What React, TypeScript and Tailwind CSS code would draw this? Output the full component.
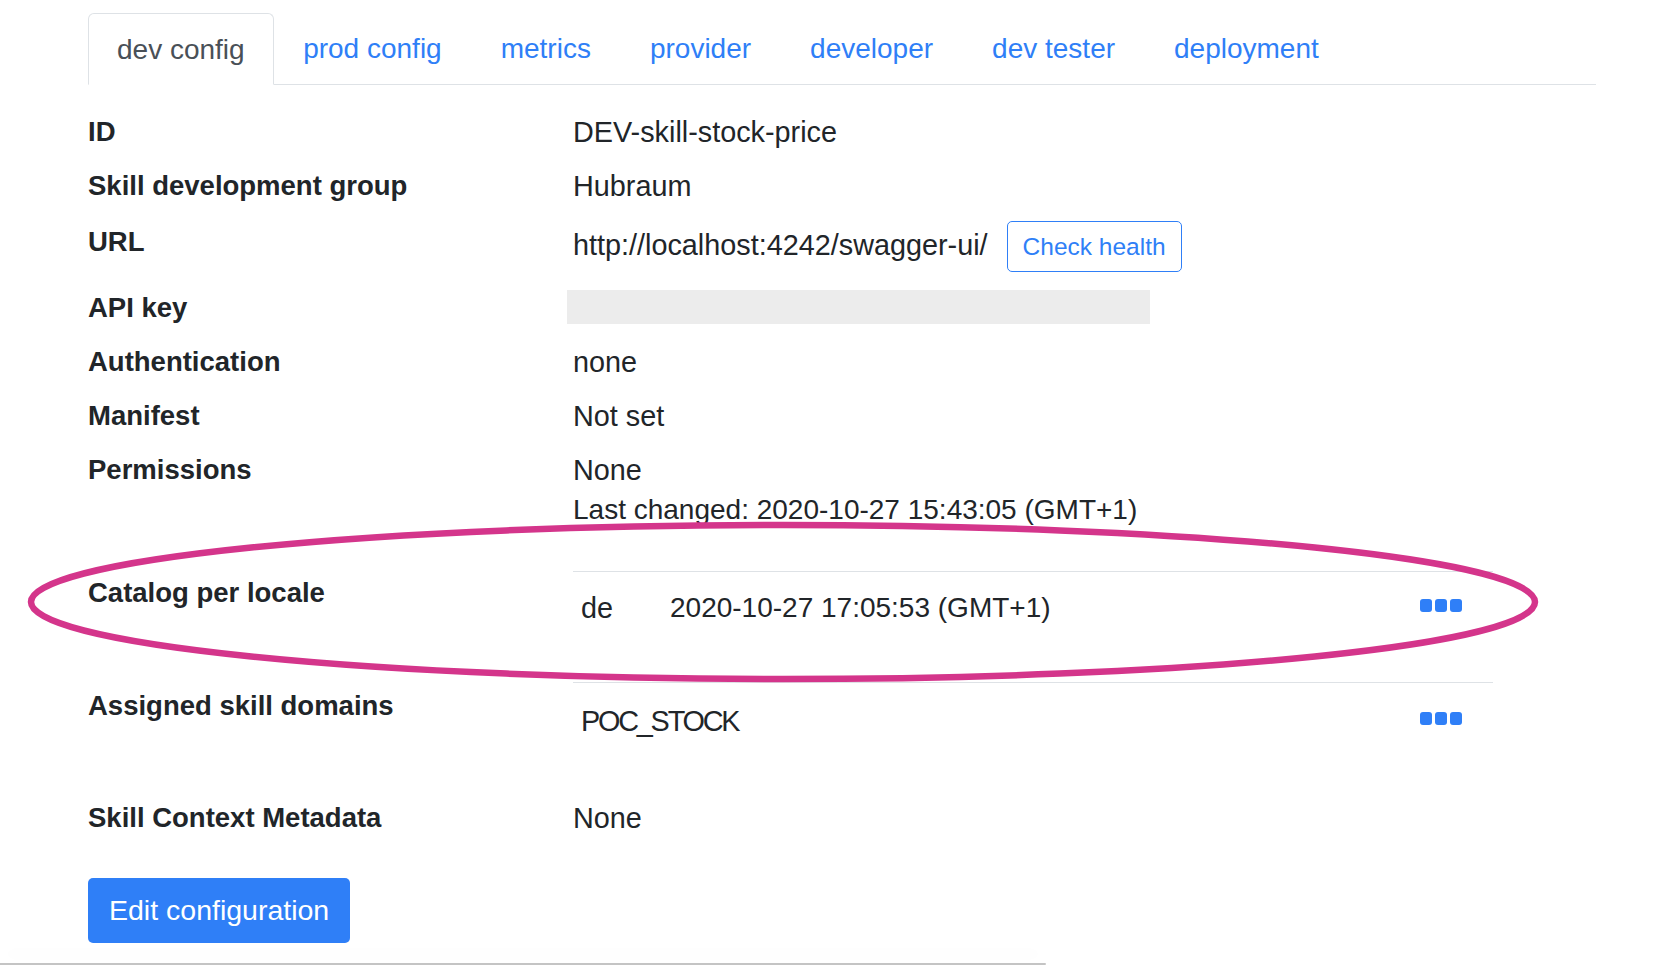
import React from 'react';

interface DetailRowProps {
  label: string;
  children: React.ReactNode;
  className?: string;
  labelClassName?: string;
}

const tabs = ['dev config', 'prod config', 'metrics', 'provider', 'developer', 'dev tester', 'deployment'];

const DetailRow: React.FC<DetailRowProps> = ({ label, children, className, labelClassName }) => (
  <div className={`grid grid-cols-[485px_1fr] ${className || ''}`}>
    <div className={`text-[27.5px] font-bold leading-[40px] text-[#212529] ${labelClassName || ''}`}>{label}</div>
    <div className="text-[28.8px] leading-[40px] text-[#212529]">{children}</div>
  </div>
);

const MoreDots: React.FC = () => (
  <div className="flex gap-[3px] mb-[6px]">
    <span className="w-[12px] h-[13px] rounded-[3px] bg-[#2f7ff7]" />
    <span className="w-[12px] h-[13px] rounded-[3px] bg-[#2f7ff7]" />
    <span className="w-[12px] h-[13px] rounded-[3px] bg-[#2f7ff7]" />
  </div>
);

const App: React.FC = () => {
  return (
    <main
      className="relative w-full h-[966px] overflow-hidden bg-white"
      style={{ fontFamily: '"Liberation Sans", Arial, sans-serif' }}
    >
      <div className="pl-[88px] pt-[13px] w-[1596px]">
        {/* tabs */}
        <nav className="flex border-b border-[#dee2e6]">
          {tabs.map((tab, i) => (
            <div
              key={tab}
              className={
                i === 0
                  ? 'px-[28px] pt-[15px] pb-[13px] text-[28px] leading-[42px] text-[#495057] border border-[#dee2e6] border-b-white rounded-t-[6px] -mb-px'
                  : 'px-[29.5px] pt-[15px] pb-[13px] text-[28px] leading-[42px] text-[#2f7ff7]'
              }
            >
              {tab}
            </div>
          ))}
        </nav>

        <div className="pt-[27px]">
          <DetailRow label="ID" className="mb-[14px]">
            DEV-skill-stock-price
          </DetailRow>
          <DetailRow label="Skill development group" className="mb-[15px]">
            Hubraum
          </DetailRow>
          <DetailRow label="URL" className="mb-[14px]" labelClassName="pt-[1px]">
            <div className="flex items-center gap-[19px]">
              <span className="-mt-[4px]">http://localhost:4242/swagger-ui/</span>
              <button className="h-[51px] px-[15px] border-[1.5px] border-[#2f7ff7] rounded-[5px] text-[24.5px] text-[#2f7ff7] bg-white">
                Check health
              </button>
            </div>
          </DetailRow>
          <DetailRow label="API key" className="mb-[14px] h-[42px]" labelClassName="pt-[2px]">
            <div className="-ml-[6px] mt-[4px] w-[583px] h-[34px] bg-[#ececec]" />
          </DetailRow>
          <DetailRow label="Authentication" className="mb-[14px]">
            none
          </DetailRow>
          <DetailRow label="Manifest" className="mb-[14px]">
            Not set
          </DetailRow>
          <DetailRow label="Permissions" className="mb-[41px]">
            <div>None</div>
            <div className="text-[28px]">Last changed: 2020-10-27 15:43:05 (GMT+1)</div>
          </DetailRow>
          <DetailRow label="Catalog per locale" className="mb-[40px]" labelClassName="pt-[2px]">
            <div className="w-[920px] border-t border-[#dee2e6] flex items-center pt-[16px] pb-[14px]">
              <span className="w-[97px] pl-[8px]">de</span>
              <span className="flex-1 text-[28px]">2020-10-27 17:05:53 (GMT+1)</span>
              <div className="pr-[31px]">
                <MoreDots />
              </div>
            </div>
          </DetailRow>
          <DetailRow label="Assigned skill domains" className="mb-[45px]" labelClassName="pt-[4px]">
            <div className="w-[920px] border-t border-[#dee2e6] flex items-center pt-[18px] pb-[12px]">
              <span className="flex-1 pl-[8px] tracking-[-2.2px]">POC_STOCK</span>
              <div className="pr-[31px]">
                <MoreDots />
              </div>
            </div>
          </DetailRow>
          <DetailRow label="Skill Context Metadata" className="mb-[40px]">
            None
          </DetailRow>
          <button className="h-[65px] px-[21px] rounded-[5px] bg-[#2f7ff7] text-white text-[28.5px]">
            Edit configuration
          </button>
        </div>
      </div>

      {/* window edge at the bottom */}
      <div className="absolute left-0 bottom-[1px] w-[1046px] h-[2px] bg-[#c4c4c4] rounded-r-full shadow-[0_-10px_18px_rgba(0,0,0,0.05)]" />

      {/* annotation */}
      <svg className="absolute left-0 top-0 pointer-events-none" width="1666" height="966">
        <ellipse cx="783" cy="602" rx="752" ry="77" fill="none" stroke="#d4358b" strokeWidth="6.5" />
      </svg>
    </main>
  );
};

export default App;
